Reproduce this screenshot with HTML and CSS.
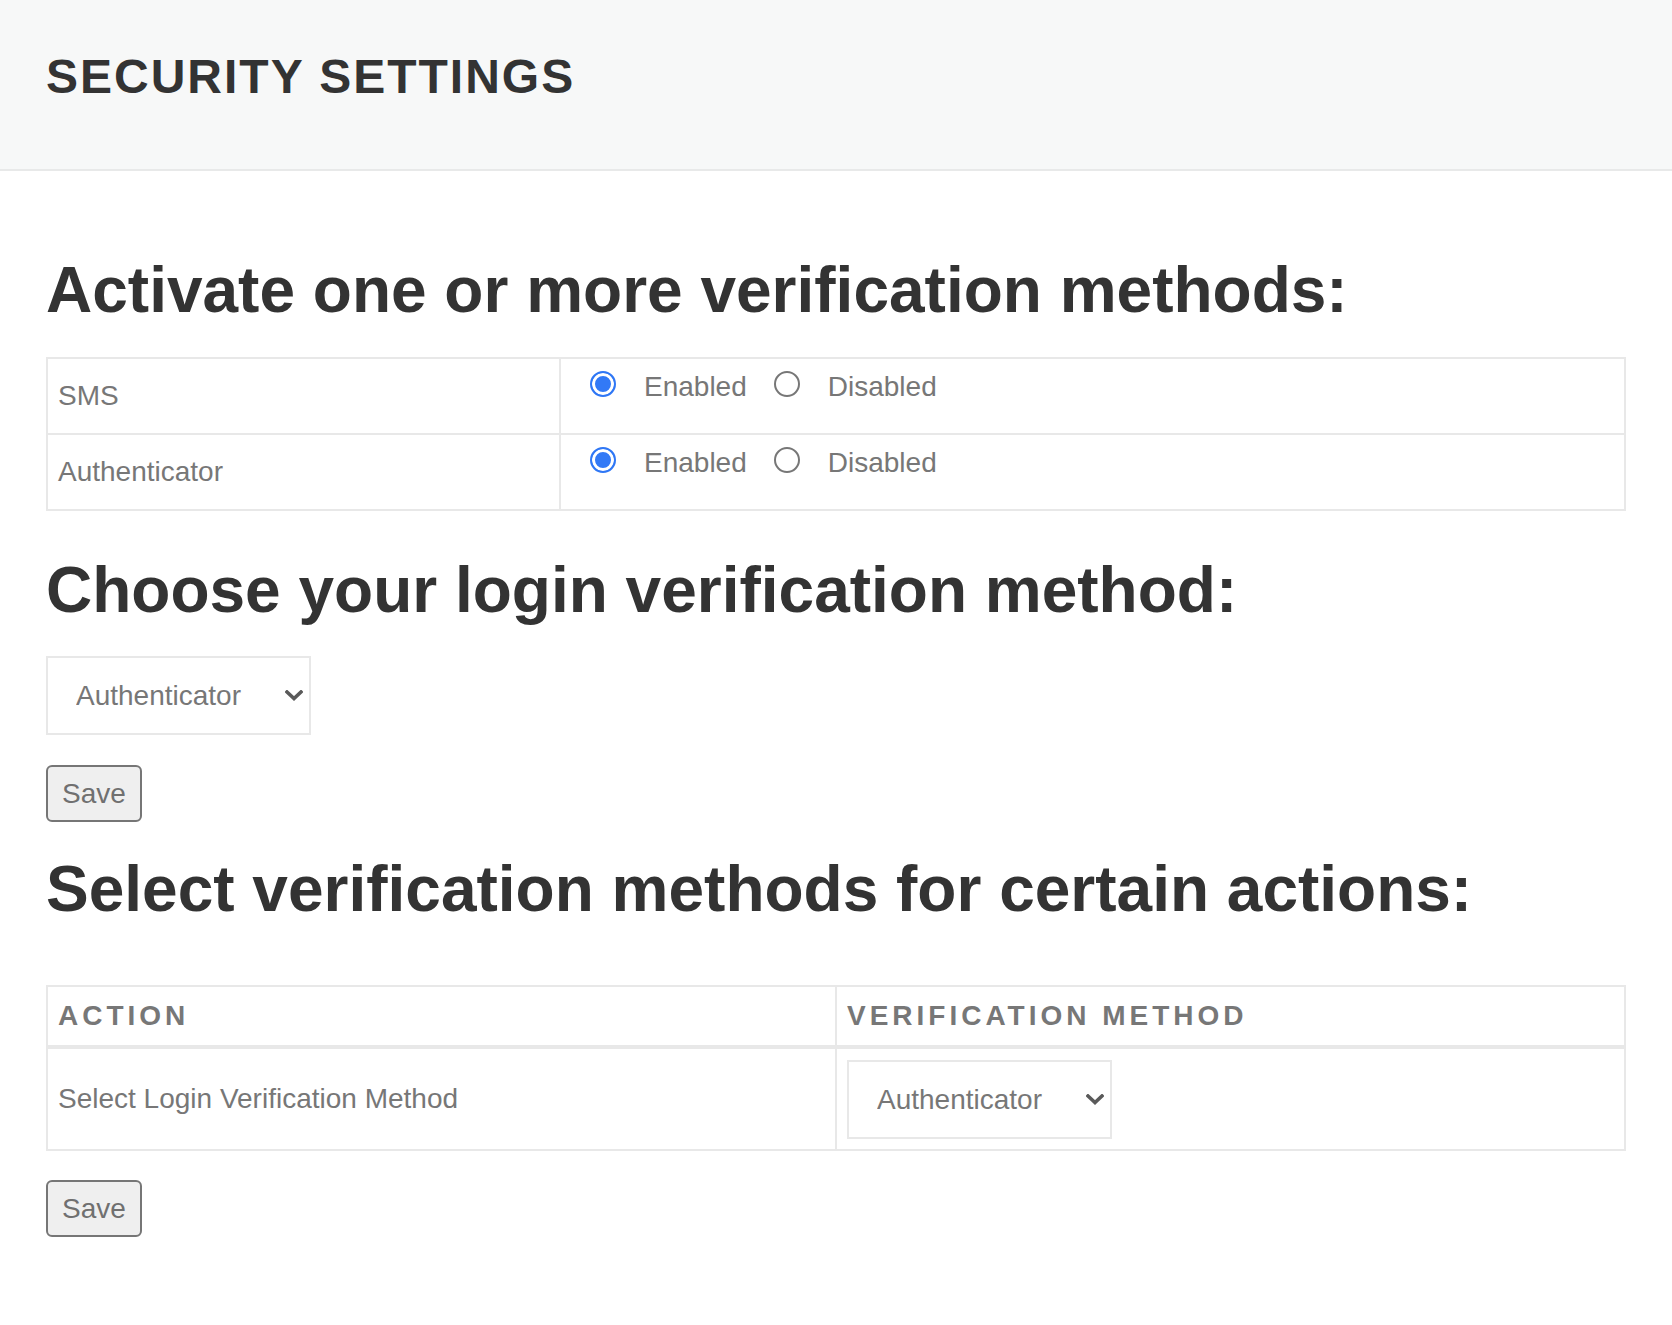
FILE: index.html
```html
<!DOCTYPE html>
<html lang="en">
<head>
<meta charset="utf-8">
<title>Security Settings</title>
<link rel="stylesheet" href="styles.css">
</head>
<body>
<header class="page-header">
  <h1 class="page-title">SECURITY SETTINGS</h1>
</header>
<main class="content">
  <h2 class="section-title first">Activate one or more verification methods:</h2>
  <div class="methods">
    <div class="cell name">SMS</div>
    <div class="cell opts">
      <label class="opt"><input type="radio" name="sms" checked><span>Enabled</span></label><label class="opt"><input type="radio" name="sms"><span>Disabled</span></label>
    </div>
    <div class="cell name row2">Authenticator</div>
    <div class="cell opts row2">
      <label class="opt"><input type="radio" name="auth" checked><span>Enabled</span></label><label class="opt"><input type="radio" name="auth"><span>Disabled</span></label>
    </div>
  </div>

  <h2 class="section-title second">Choose your login verification method:</h2>
  <div class="select-wrap standalone">
    <select class="select">
      <option>SMS</option>
      <option selected>Authenticator</option>
    </select>
    <svg class="chev" width="18" height="11" viewBox="0 0 18 11"><path d="M2 2 L9 8.5 L16 2" fill="none" stroke="#5a5a5a" stroke-width="3.6" stroke-linecap="square" stroke-linejoin="miter"/></svg>
  </div>
  <div><button class="btn save1" type="button">Save</button></div>

  <h2 class="section-title third">Select verification methods for certain actions:</h2>
  <div class="actions">
    <div class="th">Action</div>
    <div class="th col2">Verification Method</div>
    <div class="td">Select Login Verification Method</div>
    <div class="td col2">
      <div class="select-wrap">
        <select class="select">
          <option>SMS</option>
          <option selected>Authenticator</option>
        </select>
        <svg class="chev" width="18" height="11" viewBox="0 0 18 11"><path d="M2 2 L9 8.5 L16 2" fill="none" stroke="#5a5a5a" stroke-width="3.6" stroke-linecap="square" stroke-linejoin="miter"/></svg>
      </div>
    </div>
  </div>
  <div><button class="btn save2" type="button">Save</button></div>
</main>
</body>
</html>
```

FILE: styles.css
```css
* { box-sizing: border-box; }

html, body {
  margin: 0;
  padding: 0;
  background: #ffffff;
  font-family: "Liberation Sans", Arial, Helvetica, sans-serif;
  color: #777777;
}

.page-header {
  height: 171px;
  padding: 49px 46px 0;
  background: #f7f8f8;
  border-bottom: 2px solid #e8e9e9;
}

.page-title {
  margin: 0;
  font-size: 48px;
  line-height: 56px;
  font-weight: 700;
  letter-spacing: 2px;
  color: #333333;
}

.content {
  padding: 0 46px 60px;
}

.section-title {
  margin: 0;
  font-size: 64px;
  line-height: 72px;
  font-weight: 700;
  color: #333333;
}

.section-title.first { margin-top: 83px; }
.section-title.second { margin-top: 43px; }
.section-title.third { margin-top: 31px; }

/* verification methods table */
.methods {
  margin-top: 31px;
  display: grid;
  grid-template-columns: 511px 1fr;
  border: 2px solid #e8e8e8;
}

.cell {
  height: 74px;
  font-size: 28px;
  line-height: 40px;
  color: #777777;
}

.cell.row2 {
  height: 76px;
  border-top: 2px solid #e8e8e8;
}

.cell.name {
  display: flex;
  align-items: center;
  padding: 0 10px;
}

.cell.opts {
  border-left: 2px solid #e8e8e8;
  padding: 8px 19px 0;
  white-space: nowrap;
}

.opt {
  display: inline-block;
  margin-right: 17px;
}

.opt input {
  -webkit-appearance: none;
  appearance: none;
  width: 26px;
  height: 26px;
  margin: 0 28px 0 10px;
  border: 2px solid #777777;
  border-radius: 50%;
  background: #ffffff;
  vertical-align: -1px;
}

.opt input:checked {
  border-color: #2f77f5;
  background: #3279f6;
  box-shadow: inset 0 0 0 3px #ffffff;
}

/* select */
.select-wrap {
  position: relative;
  display: inline-block;
  width: 265px;
  height: 79px;
}

.select-wrap.standalone { margin-top: 30px; }

.select {
  -webkit-appearance: none;
  appearance: none;
  display: block;
  width: 265px;
  height: 79px;
  margin: 0;
  padding: 0 0 0 28px;
  border: 2px solid #e8e8e8;
  border-radius: 0;
  background: #ffffff;
  font-family: "Liberation Sans", Arial, Helvetica, sans-serif;
  font-size: 28px;
  color: #777777;
}

.chev {
  position: absolute;
  right: 8px;
  top: 34px;
  pointer-events: none;
}

/* buttons */
.btn {
  margin-top: 30px;
  height: 57px;
  padding: 0 14px;
  border: 2px solid #767676;
  border-radius: 6px;
  background: #efefef;
  font-family: "Liberation Sans", Arial, Helvetica, sans-serif;
  font-size: 28px;
  color: #707070;
}

.btn.save2 { margin-top: 29px; }

/* actions table */
.actions {
  margin-top: 60px;
  display: grid;
  grid-template-columns: 787px 1fr;
  border: 2px solid #e8e8e8;
}

.th {
  height: 58px;
  display: flex;
  align-items: center;
  padding: 0 10px;
  font-size: 28px;
  font-weight: 700;
  letter-spacing: 4px;
  text-transform: uppercase;
  color: #777777;
}

.td {
  height: 104px;
  display: flex;
  align-items: center;
  padding: 0 10px;
  border-top: 4px solid #e8e8e8;
  font-size: 28px;
  color: #777777;
}

.th.col2, .td.col2 {
  border-left: 2px solid #e8e8e8;
}
```
